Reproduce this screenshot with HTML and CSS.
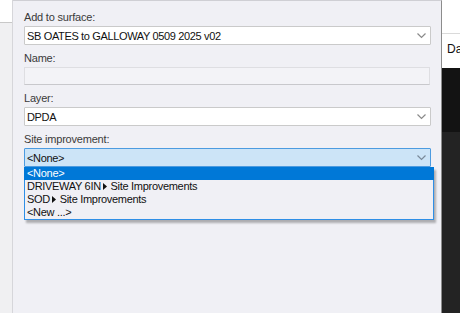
FILE: index.html
```html
<!DOCTYPE html>
<html lang="en">
<head>
    <meta charset="UTF-8">
    <title>Site Improvement</title>
    <link rel="stylesheet" href="styles.css">
</head>
<body>
    <div class="side-left">
        <div class="side-left-top"></div>
    </div>

    <div class="panel">
        <div class="field">
            <label class="field-label">Add to surface:</label>
            <div class="combo">
                <span>SB OATES to GALLOWAY 0509 2025 v02</span>
                <svg class="chev" width="9" height="6" viewBox="0 0 9 6"><polyline points="0.5,0.5 4.5,4.5 8.5,0.5" fill="none" stroke="#8a8a8a" stroke-width="1.2"/></svg>
            </div>
        </div>
        <div class="field">
            <label class="field-label">Name:</label>
            <div class="textbox"></div>
        </div>
        <div class="field">
            <label class="field-label">Layer:</label>
            <div class="combo">
                <span>DPDA</span>
                <svg class="chev" width="9" height="6" viewBox="0 0 9 6"><polyline points="0.5,0.5 4.5,4.5 8.5,0.5" fill="none" stroke="#8a8a8a" stroke-width="1.2"/></svg>
            </div>
        </div>
        <div class="field field-open">
            <label class="field-label">Site improvement:</label>
            <div class="combo combo-active">
                <span>&lt;None&gt;</span>
                <svg class="chev" width="9" height="6" viewBox="0 0 9 6"><polyline points="0.5,0.5 4.5,4.5 8.5,0.5" fill="none" stroke="#7a8a9a" stroke-width="1.2"/></svg>
            </div>
            <ul class="dropdown">
                <li class="selected">&lt;None&gt;</li>
                <li>DRIVEWAY 6IN<svg class="tri" width="6" height="7" viewBox="0 0 6 7"><polygon points="1,0 5,3.5 1,7" fill="#111"/></svg> Site Improvements</li>
                <li>SOD<svg class="tri" width="6" height="7" viewBox="0 0 6 7"><polygon points="1,0 5,3.5 1,7" fill="#111"/></svg> Site Improvements</li>
                <li>&lt;New ...&gt;</li>
            </ul>
        </div>
    </div>

    <div class="side-right">
        <div class="side-right-head"></div>
        <div class="side-right-title">Da</div>
        <div class="side-right-black"></div>
        <div class="side-right-dark"></div>
    </div>
</body>
</html>
```

FILE: styles.css
```css
* {
    box-sizing: border-box;
}
body {
    margin: 0;
    width: 460px;
    height: 313px;
    display: flex;
    font-family: "Liberation Sans", Arial, sans-serif;
    font-size: 11px;
    color: #1a1a1a;
    background-color: #f0f0f0;
    overflow: hidden;
}
.side-left {
    width: 13px;
    flex-shrink: 0;
    background-color: #f0f0f2;
    border-right: 1px solid #d6d6da;
}
.side-left-top {
    height: 23px;
    background-color: #fff;
    border-bottom: 1px solid #c8c8c8;
}
.panel {
    width: 429px;
    flex-shrink: 0;
    background-color: #f0f0f5;
    border-top: 1px solid #cfcfd4;
    border-right: 1px solid #8c8c8c;
    padding: 9px 10px 0 11px;
}
.field {
    margin-bottom: 6px;
}
.field-label {
    display: block;
    line-height: 14px;
    margin-bottom: 2px;
    color: #3a3a3a;
    letter-spacing: -0.2px;
}
.combo {
    height: 19px;
    background-color: #fff;
    border: 1px solid #cacaca;
    border-radius: 1px;
    display: flex;
    align-items: center;
    justify-content: space-between;
    padding: 0 4px 0 2px;
    letter-spacing: -0.35px;
    color: #111;
}
.chev {
    display: block;
    margin-top: 1px;
}
.textbox {
    height: 18px;
    background-color: #f3f3f7;
    border: 1px solid #dedee2;
    border-bottom-color: #c8c8cc;
    margin-right: 1px;
}
.field-open {
    position: relative;
}
.combo-active {
    background-color: #cce4f7;
    border-color: #4c9be0;
}
.dropdown {
    position: absolute;
    left: 0;
    top: 35px;
    width: 410px;
    margin: 0;
    padding: 0;
    list-style: none;
    background-color: #f0f0f5;
    border: 1px solid #2f8fe6;
    border-top: none;
    box-shadow: 2px 3px 2px rgba(0, 0, 0, 0.28);
    letter-spacing: -0.3px;
}
.dropdown li {
    height: 13px;
    line-height: 13px;
    padding-left: 2px;
    color: #111;
}
.dropdown li.selected {
    background-color: #0078d7;
    color: #fff;
    margin: 0 -1px;
    padding-left: 3px;
}
.tri {
    margin-left: 1px;
    vertical-align: 0;
}
.side-right {
    flex: 1;
    display: flex;
    flex-direction: column;
    background-color: #fff;
}
.side-right-head {
    height: 34px;
    border-bottom: 1px solid #dadada;
}
.side-right-title {
    height: 34px;
    padding: 8px 0 0 5px;
    font-size: 12px;
    color: #111;
    white-space: nowrap;
    overflow: hidden;
}
.side-right-black {
    height: 64px;
    background-color: #131313;
}
.side-right-dark {
    flex: 1;
    background-color: #232323;
}
```
